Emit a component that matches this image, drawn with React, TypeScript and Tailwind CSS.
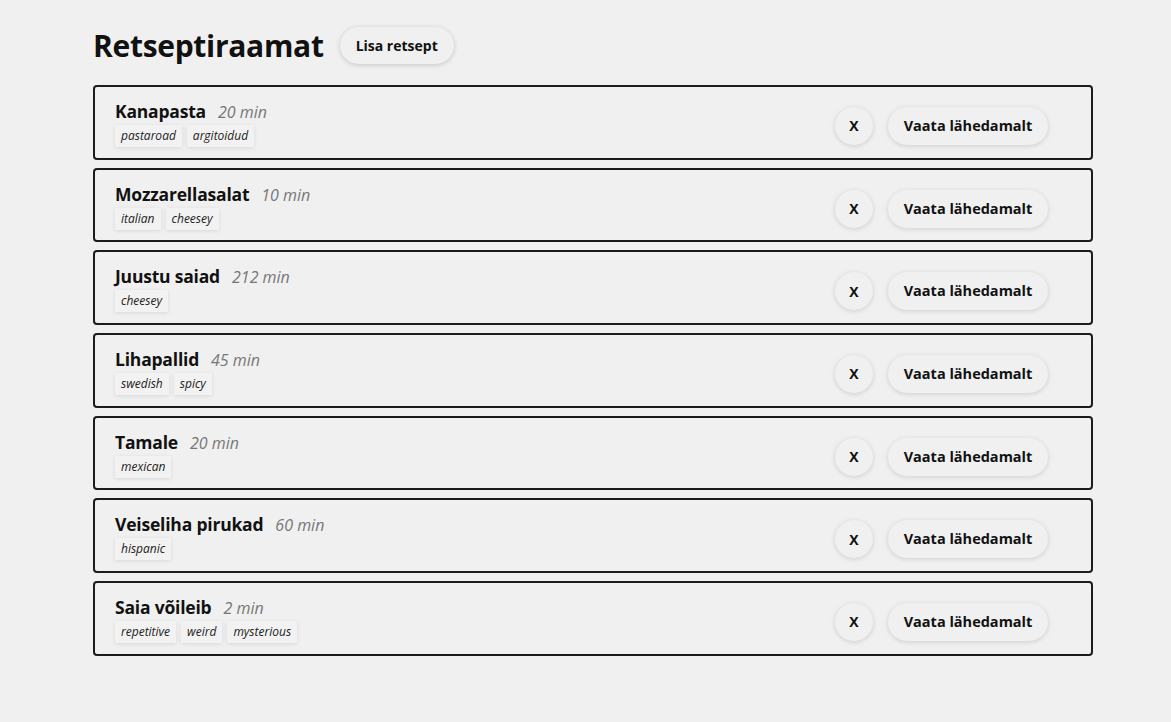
import React from "react";

type Recipe = { name: string; time: string; tags: string[] };

const recipes: Recipe[] = [
  { name: "Kanapasta", time: "20 min", tags: ["pastaroad", "argitoidud"] },
  { name: "Mozzarellasalat", time: "10 min", tags: ["italian", "cheesey"] },
  { name: "Juustu saiad", time: "212 min", tags: ["cheesey"] },
  { name: "Lihapallid", time: "45 min", tags: ["swedish", "spicy"] },
  { name: "Tamale", time: "20 min", tags: ["mexican"] },
  { name: "Veiseliha pirukad", time: "60 min", tags: ["hispanic"] },
  { name: "Saia võileib", time: "2 min", tags: ["repetitive", "weird", "mysterious"] },
];

const font = { fontFamily: '"Open Sans", "Noto Sans", sans-serif' };

export default function App() {
  return (
    <div
      className="min-h-screen w-full bg-[#f0f0f0] pl-[93px] pt-[27px] text-[#111]"
      style={font}
    >
      <div className="flex h-[37px] items-center gap-[16px]">
        <h1 className="text-[30px] font-bold leading-none tracking-[-0.3px]">Retseptiraamat</h1>
        <button className="h-[37px] rounded-full bg-[#f0f0f0] px-[16px] text-[14px] font-bold shadow-[0_1px_5px_rgba(0,0,0,0.18)]">
          Lisa retsept
        </button>
      </div>
      <div className="mt-[21px] flex w-[1000px] flex-col gap-[8px]">
        {recipes.map((r) => (
          <div
            key={r.name}
            className="flex h-[74.7px] items-center justify-between rounded-[4px] border-2 border-[#1c1c1c] pl-[20px] pr-[43px]"
          >
            <div className="flex flex-col self-start pt-[12px]">
              <div className="flex items-baseline">
                <span className="text-[17.5px] font-bold leading-[24px] tracking-[-0.2px]">{r.name}</span>
                <span className="ml-[12px] text-[16px] italic leading-[24px] text-[#777]">{r.time}</span>
              </div>
              <div className="mt-[1px] flex gap-[5px]">
                {r.tags.map((t) => (
                  <span
                    key={t}
                    className="h-[22px] bg-[#f2f2f2] px-[6px] text-[12px] italic leading-[22px] text-[#222] shadow-[0_1px_4px_rgba(0,0,0,0.1)]"
                  >
                    {t}
                  </span>
                ))}
              </div>
            </div>
            <div className="mt-[7px] flex items-center gap-[15px]">
              <button className="flex h-[38px] w-[38px] items-center justify-center rounded-full bg-[#f0f0f0] text-[14px] font-bold shadow-[0_1px_5px_rgba(0,0,0,0.15)]">
                X
              </button>
              <button className="h-[38px] w-[160px] rounded-full bg-[#f0f0f0] text-[14.5px] font-bold shadow-[0_1px_5px_rgba(0,0,0,0.15)]">
                Vaata lähedamalt
              </button>
            </div>
          </div>
        ))}
      </div>
    </div>
  );
}
